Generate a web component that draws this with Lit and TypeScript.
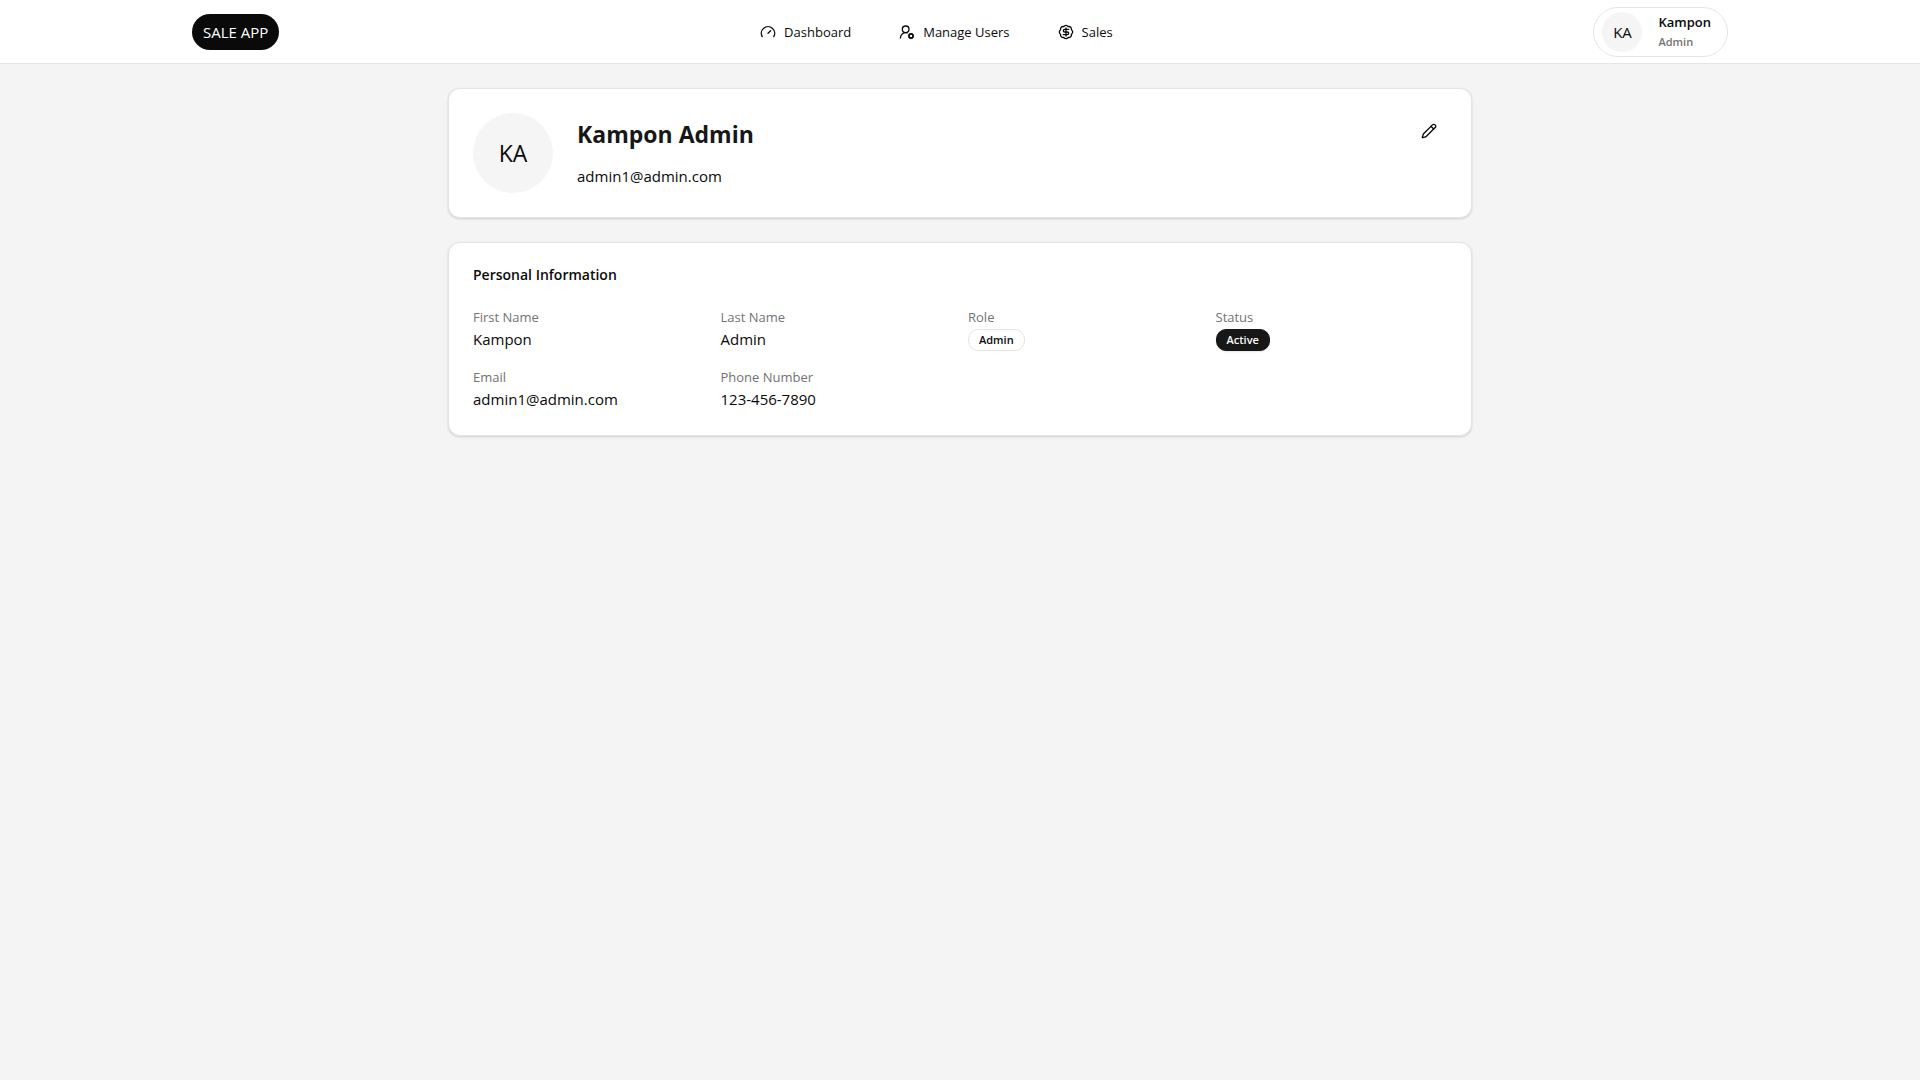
import { LitElement, html, css, svg } from "lit";
import { customElement, property } from "lit/decorators.js";

const icon = (body: unknown) => html`
  <svg width="16" height="16" viewBox="0 0 24 24" fill="none" stroke="currentColor"
    stroke-width="2" stroke-linecap="round" stroke-linejoin="round" aria-hidden="true">${body}</svg>`;

const gauge = icon(svg`<path d="m12 14 4-4"/><path d="M3.34 19a10 10 0 1 1 17.32 0"/>`);
const userCog = icon(svg`
  <path d="M2 21a8 8 0 0 1 10.434-7.62"/><circle cx="10" cy="8" r="5"/><circle cx="18" cy="18" r="3"/>
  <path d="m19.5 14.3-.4.9"/><path d="m16.9 20.8-.4.9"/><path d="m21.7 19.5-.9-.4"/><path d="m15.2 16.9-.9-.4"/>
  <path d="m21.7 16.5-.9.4"/><path d="m15.2 19.1-.9.4"/><path d="m19.5 21.7-.4-.9"/><path d="m16.9 15.2-.4-.9"/>`);
const badgeDollar = icon(svg`
  <path d="M3.85 8.62a4 4 0 0 1 4.78-4.77 4 4 0 0 1 6.74 0 4 4 0 0 1 4.78 4.78 4 4 0 0 1 0 6.74 4 4 0 0 1-4.77 4.78 4 4 0 0 1-6.75 0 4 4 0 0 1-4.78-4.77 4 4 0 0 1 0-6.76Z"/>
  <path d="M16 8h-6a2 2 0 1 0 0 4h4a2 2 0 1 1 0 4H8"/><path d="M12 18V6"/>`);
const pencil = icon(svg`
  <path d="M21.174 6.812a1 1 0 0 0-3.986-3.987L3.842 16.174a2 2 0 0 0-.5.83l-1.321 4.352a.5.5 0 0 0 .623.622l4.353-1.32a2 2 0 0 0 .83-.497z"/>
  <path d="m15 5 4 4"/>`);

const links = [
  { label: "Dashboard", icon: gauge },
  { label: "Manage Users", icon: userCog },
  { label: "Sales", icon: badgeDollar },
];

const fields = [
  { label: "First Name", value: "Kampon" },
  { label: "Last Name", value: "Admin" },
  { label: "Role", value: "Admin", badge: "outline" },
  { label: "Status", value: "Active", badge: "solid" },
  { label: "Email", value: "admin1@admin.com" },
  { label: "Phone Number", value: "123-456-7890" },
];

@customElement("user-avatar")
class UserAvatar extends LitElement {
  @property() initials = "";
  @property({ reflect: true }) size = "small";

  static styles = css`
    :host {
      display: flex;
      flex: none;
      align-items: center;
      justify-content: center;
      width: 40px;
      height: 40px;
      border-radius: 50%;
      background: #f5f5f5;
      font-size: 15px;
      line-height: 24px;
    }
    :host([size="large"]) {
      width: 80px;
      height: 80px;
      font-size: 23px;
      line-height: 32px;
    }
  `;

  render() {
    return html`<span>${this.initials}</span>`;
  }
}

@customElement("app-root")
class AppRoot extends LitElement {
  static styles = css`
    :host {
      display: block;
      min-height: 100vh;
      background: #f4f4f4;
      color: #0a0a0a;
      font: 15px/24px "Segoe UI", "Open Sans", "Noto Sans", sans-serif;
    }
    * { box-sizing: border-box; margin: 0; }
    a { color: inherit; text-decoration: none; }
    button { font: inherit; color: inherit; cursor: pointer; }
    svg { display: block; flex: none; }
    .header { background: #fff; border-bottom: 1px solid #e5e5e5; }
    .bar {
      display: flex;
      align-items: center;
      justify-content: space-between;
      max-width: 1536px;
      height: 63px;
      margin: 0 auto;
    }
    .logo {
      padding: 6px 11px;
      border-radius: 18px;
      background: #0a0a0a;
      color: #fff;
    }
    .nav { display: flex; gap: 48px; font-size: 13px; line-height: 20px; }
    .link { display: flex; align-items: center; gap: 8px; }
    .user {
      display: flex;
      align-items: center;
      gap: 16px;
      padding: 4px 16px 4px 8px;
      border: 1px solid #e5e5e5;
      border-radius: 25px;
      background: #fff;
      text-align: left;
    }
    .who { display: flex; flex-direction: column; font-weight: 600; line-height: 20px; }
    .who-name { font-size: 13px; }
    .who-role { font-size: 11px; color: #737373; }
    .main {
      display: flex;
      flex-direction: column;
      gap: 24px;
      max-width: 1024px;
      margin: 0 auto;
      padding: 24px 0;
    }
    .card {
      padding: 24px;
      border: 1px solid #e5e5e5;
      border-radius: 12px;
      background: #fff;
      box-shadow: 0 1px 3px rgb(0 0 0 / 0.1), 0 1px 2px rgb(0 0 0 / 0.06);
    }
    .profile { display: flex; align-items: flex-start; gap: 24px; }
    .identity {
      display: flex;
      flex: 1;
      flex-direction: column;
      gap: 14px;
      align-self: center;
    }
    .name { font-size: 23px; line-height: 32px; font-weight: 700; color: #171717; }
    .edit {
      display: flex;
      align-items: center;
      justify-content: center;
      width: 36px;
      height: 36px;
      padding: 0;
      border: 0;
      border-radius: 6px;
      background: none;
    }
    .details { display: flex; flex-direction: column; gap: 24px; }
    .title { font-size: 14px; line-height: 16px; font-weight: 600; }
    .grid { display: grid; grid-template-columns: repeat(4, 1fr); gap: 16px; }
    .label { font-size: 13px; line-height: 20px; color: #737373; }
    .value { display: flex; align-items: flex-end; height: 24px; }
    .badge {
      padding: 2px 10px;
      border: 1px solid #e5e5e5;
      border-radius: 10px;
      font-size: 11px;
      line-height: 16px;
      font-weight: 600;
    }
    .solid {
      border-color: #171717;
      background: #171717;
      color: #fafafa;
      box-shadow: 0 1px 2px rgb(0 0 0 / 0.1);
    }
  `;

  render() {
    return html`
      <header class="header">
        <div class="bar">
          <a class="logo" href="#">SALE APP</a>
          <nav class="nav">
            ${links.map((l) => html`<a class="link" href="#">${l.icon}<span>${l.label}</span></a>`)}
          </nav>
          <button class="user" type="button">
            <user-avatar initials="KA"></user-avatar>
            <span class="who">
              <span class="who-name">Kampon</span>
              <span class="who-role">Admin</span>
            </span>
          </button>
        </div>
      </header>
      <main class="main">
        <section class="card profile">
          <user-avatar initials="KA" size="large"></user-avatar>
          <div class="identity">
            <h1 class="name">Kampon Admin</h1>
            <p>admin1@admin.com</p>
          </div>
          <button class="edit" type="button" aria-label="Edit profile">${pencil}</button>
        </section>
        <section class="card details">
          <h2 class="title">Personal Information</h2>
          <dl class="grid">
            ${fields.map((f) => html`
              <div>
                <dt class="label">${f.label}</dt>
                <dd class="value">${f.badge ? html`<span class="badge ${f.badge}">${f.value}</span>` : f.value}</dd>
              </div>`)}
          </dl>
        </section>
      </main>
    `;
  }
}
